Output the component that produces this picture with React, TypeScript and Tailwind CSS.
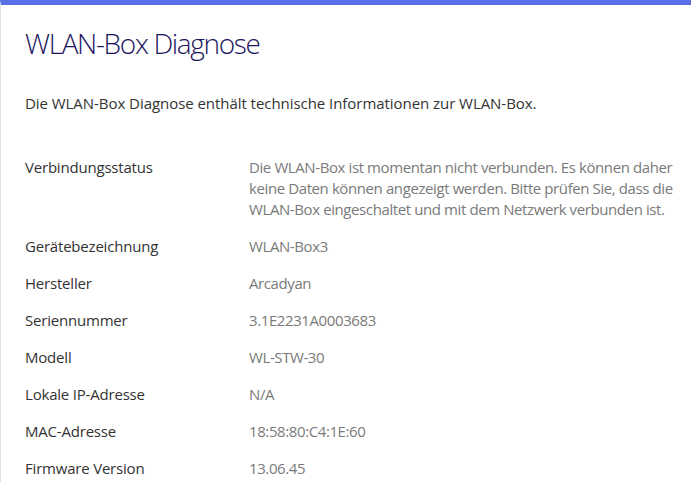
const ROWS: { label: string; value: string }[] = [
  {
    label: 'Verbindungsstatus',
    value:
      'Die WLAN-Box ist momentan nicht verbunden. Es können daher keine Daten können angezeigt werden. Bitte prüfen Sie, dass die WLAN-Box eingeschaltet und mit dem Netzwerk verbunden ist.',
  },
  { label: 'Gerätebezeichnung', value: 'WLAN-Box3' },
  { label: 'Hersteller', value: 'Arcadyan' },
  { label: 'Seriennummer', value: '3.1E2231A0003683' },
  { label: 'Modell', value: 'WL-STW-30' },
  { label: 'Lokale IP-Adresse', value: 'N/A' },
  { label: 'MAC-Adresse', value: '18:58:80:C4:1E:60' },
  { label: 'Firmware Version', value: '13.06.45' },
];

const App = () => {
  return (
    <div className="min-h-screen bg-white" style={{ fontFamily: '"Open Sans", sans-serif' }}>
      <div className="min-h-screen border-t-[5px] border-l border-t-[#5a6ee6] border-l-[#e2e2e2] pl-6 pt-[20px]">
        {/* Header */}
        <h1 className="text-[28px] leading-[36px] font-light text-[#1d1660] tracking-[-1.35px]">WLAN-Box Diagnose</h1>

        <p className="mt-[32px] text-[15px] leading-[21px] tracking-[-0.05px] text-[#333333]">
          Die WLAN-Box Diagnose enthält technische Informationen zur WLAN-Box.
        </p>

        {/* Details */}
        <div className="mt-[43px] flex flex-col gap-4">
          {ROWS.map((row) => (
            <div key={row.label} className="flex text-[15px] leading-[21px]">
              <div className="w-[224px] shrink-0 tracking-[-0.2px] text-[#333333]">{row.label}</div>
              <div className="w-[432px] shrink-0 tracking-[-0.4px] text-[#7a7a7a]">{row.value}</div>
            </div>
          ))}
        </div>
      </div>
    </div>
  );
};

export default App;
